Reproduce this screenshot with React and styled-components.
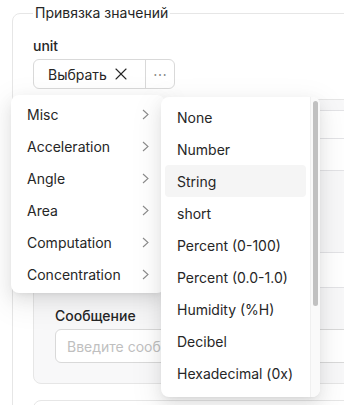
import React from "react";
import styled, { createGlobalStyle } from "styled-components";
import { X } from "lucide-react";

const GlobalStyle = createGlobalStyle`
  body {
    margin: 0;
    background: #fff;
    font-family: Inter, "Noto Sans", sans-serif;
    color: #262626;
    overflow: hidden;
  }
`;

const Page = styled.div`
  position: relative;
  height: 405px;
  overflow: hidden;
`;

const Fieldset = styled.fieldset`
  margin: 0 -30px 0 12px;
  padding: 0 0 0 20px;
  border: 1px solid #e6e6e6;
  border-radius: 8px;
  min-height: 420px;
`;

const Legend = styled.legend`
  padding: 0 2px;
  font-size: 14px;
  line-height: 26px;
  color: #262626;
`;

const Label = styled.div`
  font-size: 14px;
  font-weight: 500;
  line-height: 20px;
  margin-top: ${(p) => p.$top || 0}px;
`;

const ButtonGroup = styled.div`
  display: inline-flex;
  margin-top: 3px;
  height: 30px;
  border: 1px solid #d9d9d9;
  border-radius: 6px;
  box-sizing: border-box;
`;

const GroupButton = styled.div`
  display: flex;
  align-items: center;
  gap: 4px;
  padding: 0 ${(p) => p.$pad}px;
  font-size: 14px;
  color: ${(p) => p.$muted ? "#8c8c8c" : "#262626"};
  & + & {
    border-left: 1px solid #d9d9d9;
  }
`;

const Card = styled.div`
  margin-top: ${(p) => p.$gap}px;
  background: ${(p) => p.$white ? "#fff" : "#f8f8f9"};
  border: 1px solid #e6e6e6;
  border-radius: 8px;
  padding: 0 0 20px 21px;
`;

const Row = styled.div`
  height: ${(p) => p.$h}px;
  border-bottom: 1px solid #e3e3e6;
  background: ${(p) => p.$white ? "#fff" : "transparent"};
`;

const Input = styled.div`
  margin-top: 3px;
  height: 34px;
  box-sizing: border-box;
  border: 1px solid #d9d9d9;
  border-radius: 6px;
  background: #fff;
  display: flex;
  align-items: center;
  padding-left: 11px;
  font-size: 14px;
  color: #bfbfbf;
  white-space: nowrap;
`;

const Menu = styled.div`
  position: absolute;
  left: ${(p) => p.$left}px;
  top: ${(p) => p.$top}px;
  width: ${(p) => p.$width}px;
  height: ${(p) => p.$height}px;
  box-sizing: border-box;
  background: #fff;
  border-radius: 8px;
  box-shadow: 0 6px 16px rgba(0, 0, 0, 0.08), 0 3px 6px -4px rgba(0, 0, 0, 0.12),
    0 9px 28px 8px rgba(0, 0, 0, 0.05);
  display: flex;
  overflow: hidden;
`;

const List = styled.div`
  flex: 1;
  padding: ${(p) => p.$pad}px 4px;
  display: flex;
  flex-direction: column;
`;

const Item = styled.div`
  height: 32px;
  flex: none;
  display: flex;
  align-items: center;
  justify-content: space-between;
  padding: 0 12px;
  border-radius: 4px;
  font-size: 14px;
  color: #262626;
  background: ${(p) => p.$active ? "#f5f5f5" : "transparent"};
`;

const Track = styled.div`
  width: 10px;
  background: #fafafa;
  border-left: 1px solid #f0f0f0;
  padding: 4px 2px 0 2px;
  box-sizing: border-box;
`;

const Thumb = styled.div`
  height: 205px;
  border-radius: 3px;
  background: #c1c1c1;
`;

const Chevron = () => (
  <svg width="7" height="11" viewBox="0 0 7 11">
    <polyline points="1,1 6,5.5 1,10" fill="none" stroke="#8c8c8c" strokeWidth="1.1" />
  </svg>
);

const groups = ["Misc", "Acceleration", "Angle", "Area", "Computation", "Concentration"];
const units = [
  "None",
  "Number",
  "String",
  "short",
  "Percent (0-100)",
  "Percent (0.0-1.0)",
  "Humidity (%H)",
  "Decibel",
  "Hexadecimal (0x)",
];

export default function App() {
  return (
    <Page>
      <GlobalStyle />
      <Fieldset>
        <Legend>Привязка значений</Legend>
        <Label $top={10}>unit</Label>
        <ButtonGroup>
          <GroupButton $pad={14}>
            Выбрать <X size={20} strokeWidth={1.3} />
          </GroupButton>
          <GroupButton $pad={7} $muted>
            ⋯
          </GroupButton>
        </ButtonGroup>
        <Card $gap={10}>
          <Row $h={10} />
          <Row $h={27} $white />
          <Row $h={31} $white />
          <Row $h={81} />
          <Row $h={34} $white />
          <Label $top={18}>Сообщение</Label>
          <Input>Введите сообщение</Input>
        </Card>
        <Card $gap={16} $white>
          <Row $h={40} $white />
        </Card>
      </Fieldset>

      <Menu $left={11} $top={95} $width={154} $height={198}>
        <List $pad={3}>
          {groups.map((g) => (
            <Item key={g}>
              {g}
              <Chevron />
            </Item>
          ))}
        </List>
      </Menu>

      <Menu $left={161} $top={97} $width={159} $height={300}>
        <List $pad={4}>
          {units.map((u) => (
            <Item key={u} $active={u === "String"}>
              {u}
            </Item>
          ))}
        </List>
        <Track>
          <Thumb />
        </Track>
      </Menu>
    </Page>
  );
}
